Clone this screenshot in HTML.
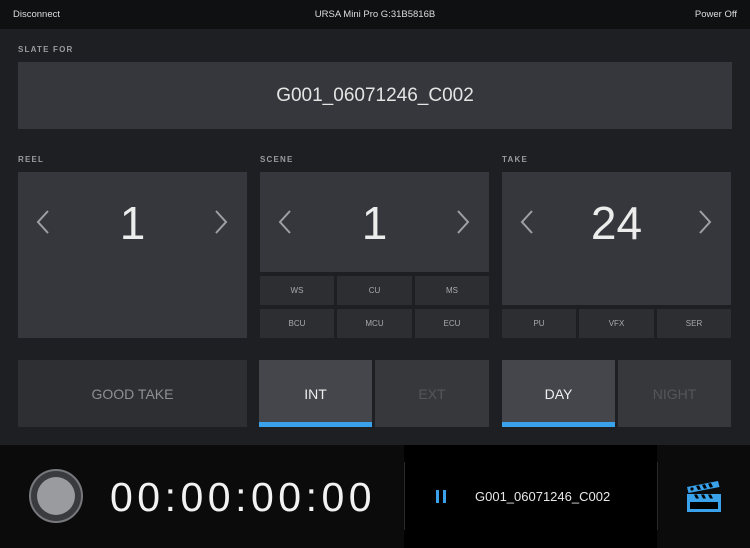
<!DOCTYPE html>
<html><head><meta charset="utf-8"><style>
*{margin:0;padding:0;box-sizing:border-box}
body{width:750px;height:548px;background:#1e1f22;font-family:"Liberation Sans",sans-serif;position:relative;overflow:hidden;color:#ddd}
.a{position:absolute}
.c{display:flex;align-items:center;justify-content:center}
.lbl{font-size:8px;letter-spacing:1.2px;color:#9a9ba0;font-weight:bold}
.box{background:#36373c}
.sb{background:#2d2e32;font-size:8px;color:#a8a9ad}
.num{font-size:46px;color:#ececec;height:50px;line-height:50px;text-align:center;width:229px}
.big{font-size:14px}
</style></head><body>
<div class="a" style="left:0;top:0;width:750px;height:29px;background:#0f1012"></div>
<div class="a" style="left:13px;top:9px;font-size:9.5px;color:#ddd">Disconnect</div>
<div class="a" style="left:0;top:9px;width:750px;text-align:center;font-size:9.5px;color:#ddd">URSA Mini Pro G:31B5816B</div>
<div class="a" style="right:13px;top:9px;font-size:9.5px;color:#ddd">Power Off</div>

<div class="a lbl" style="left:18px;top:45px">SLATE FOR</div>
<div class="a box c" style="left:18px;top:62px;width:714px;height:67px;font-size:19px;color:#e4e4e4">G001_06071246_C002</div>

<div class="a lbl" style="left:18px;top:155px">REEL</div>
<div class="a lbl" style="left:260px;top:155px">SCENE</div>
<div class="a lbl" style="left:502px;top:155px">TAKE</div>

<div class="a box" style="left:18px;top:172px;width:229px;height:166px"></div>
<div class="a box" style="left:260px;top:172px;width:229px;height:100px"></div>
<div class="a box" style="left:502px;top:172px;width:229px;height:133px"></div>
<div class="a num" style="left:18px;top:198px">1</div>
<div class="a num" style="left:260px;top:198px">1</div>
<div class="a num" style="left:502px;top:198px">24</div>

<svg class="a" style="left:0;top:0" width="750" height="548" fill="none" stroke="#9fa0a4" stroke-width="2">
<path d="M48 211 L38 222 L48 233"/><path d="M216 211 L226 222 L216 233"/>
<path d="M290 211 L280 222 L290 233"/><path d="M458 211 L468 222 L458 233"/>
<path d="M532 211 L522 222 L532 233"/><path d="M700 211 L710 222 L700 233"/>
</svg>

<div class="a sb c" style="left:260px;top:276px;width:74px;height:29px">WS</div>
<div class="a sb c" style="left:337px;top:276px;width:75px;height:29px">CU</div>
<div class="a sb c" style="left:415px;top:276px;width:74px;height:29px">MS</div>
<div class="a sb c" style="left:260px;top:309px;width:74px;height:29px">BCU</div>
<div class="a sb c" style="left:337px;top:309px;width:75px;height:29px">MCU</div>
<div class="a sb c" style="left:415px;top:309px;width:74px;height:29px">ECU</div>
<div class="a sb c" style="left:502px;top:309px;width:74px;height:29px">PU</div>
<div class="a sb c" style="left:579px;top:309px;width:75px;height:29px">VFX</div>
<div class="a sb c" style="left:657px;top:309px;width:74px;height:29px">SER</div>

<div class="a c big" style="left:18px;top:360px;width:229px;height:67px;background:#2e2f33;color:#8e8f93">GOOD TAKE</div>
<div class="a c big" style="left:259px;top:360px;width:113px;height:67px;background:#45464b;color:#eee">INT</div>
<div class="a" style="left:259px;top:422px;width:113px;height:5px;background:#3aa2eb"></div>
<div class="a c big" style="left:375px;top:360px;width:114px;height:67px;background:#37383c;color:#55565a">EXT</div>
<div class="a c big" style="left:502px;top:360px;width:113px;height:67px;background:#45464b;color:#eee">DAY</div>
<div class="a" style="left:502px;top:422px;width:113px;height:5px;background:#3aa2eb"></div>
<div class="a c big" style="left:618px;top:360px;width:113px;height:67px;background:#37383c;color:#55565a">NIGHT</div>

<div class="a" style="left:0;top:445px;width:750px;height:103px;background:#0b0b0c"></div>
<div class="a" style="left:404px;top:445px;width:253px;height:103px;background:#000"></div>
<div class="a" style="left:404px;top:462px;width:1px;height:68px;background:#2a2a2c"></div>
<div class="a" style="left:657px;top:462px;width:1px;height:68px;background:#2a2a2c"></div>
<div class="a" style="left:29px;top:469px;width:54px;height:54px;border-radius:50%;background:#3a3b3f;border:2px solid #77787c"></div>
<div class="a" style="left:37px;top:477px;width:38px;height:38px;border-radius:50%;background:#9a9b9f"></div>
<div class="a" style="left:110px;top:474px;font-size:41px;color:#f2f2f2;letter-spacing:4.5px;line-height:46px">00:00:00:00</div>
<div class="a" style="left:436px;top:490px;width:3px;height:13px;background:#3aa2eb"></div>
<div class="a" style="left:443px;top:490px;width:3px;height:13px;background:#3aa2eb"></div>
<div class="a" style="left:475px;top:489px;font-size:13px;color:#e8e8e8">G001_06071246_C002</div>
<svg class="a" style="left:684px;top:479px" width="40" height="36" viewBox="0 0 40 36">
<g fill="#3aa2eb">
<path d="M3 8 L34 2 L35.5 8 L4.5 14 Z"/>
<rect x="3" y="15" width="34" height="5"/>
<rect x="3" y="19" width="34" height="14"/>
</g>
<g fill="#000">
<rect x="6" y="23" width="28" height="7"/>
<circle cx="8" cy="10" r="1.6"/>
<path d="M12 7 l3 -0.6 l2 4 l-3 0.6z M18 5.8 l3 -0.6 l2 4 l-3 0.6z M24 4.6 l3 -0.6 l2 4 l-3 0.6z"/>
<path d="M10 15.5 h3 l2 4 h-3z M17 15.5 h3 l2 4 h-3z M24 15.5 h3 l2 4 h-3z"/>
</g>
</svg>
</body></html>
